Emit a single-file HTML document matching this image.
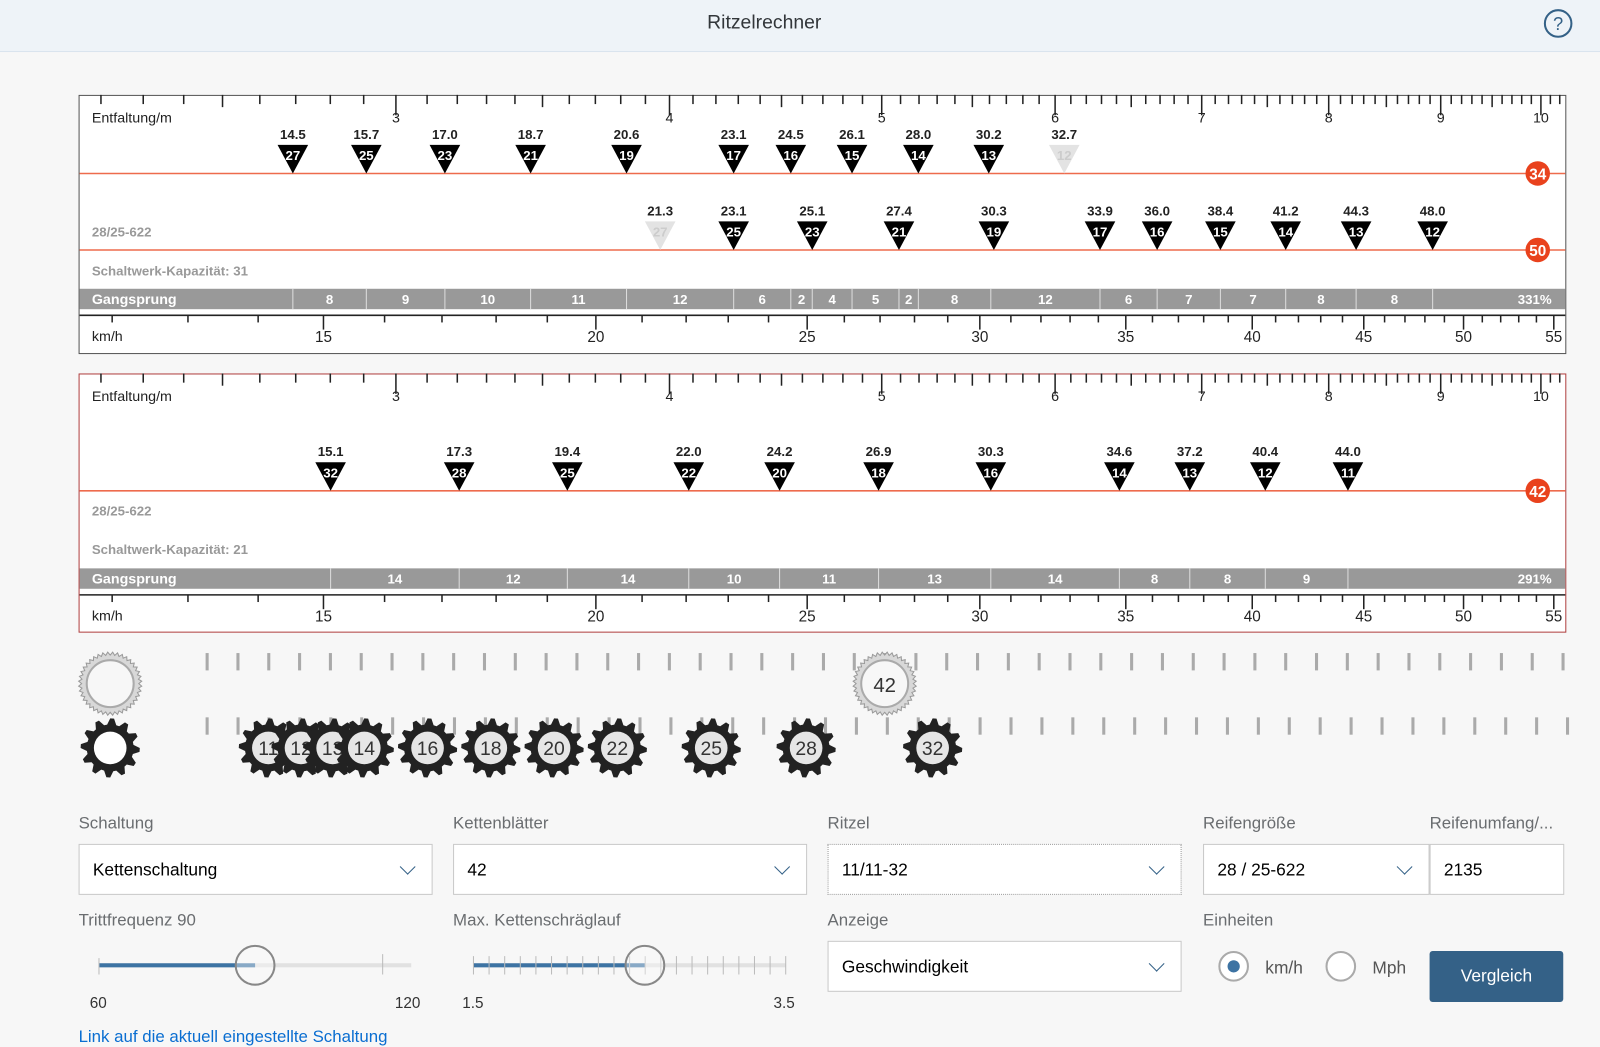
<!DOCTYPE html>
<html><head><meta charset="utf-8"><style>
*{box-sizing:border-box;margin:0;padding:0}
html,body{width:1600px;height:1046px;overflow:hidden}
body{background:#f7f7f7;font-family:"Liberation Sans",sans-serif}
#w{position:absolute;left:0;top:0;width:1568px;height:1025px;transform:scale(1.0204);transform-origin:0 0}
.hdr{position:absolute;left:0;top:0;width:1568px;height:51px;background:#eef3f8;border-bottom:1px solid #d9e3ee}
.hdr .t{position:absolute;left:0;width:1498px;top:12px;text-align:center;font-size:19px;color:#32363a}
.lab{position:absolute;font-size:16.5px;color:#6a6d70}
.inp{position:absolute;height:50px;background:#fff;border:1px solid #c8c8c8;font-size:17px;color:#000;padding:15px 13px}
.chev{position:absolute;right:18px;top:16px;width:11px;height:11px;border-right:1.5px solid #346187;border-bottom:1.5px solid #346187;transform:rotate(45deg);}
svg text{font-family:"Liberation Sans",sans-serif}
</style></head><body><div id="w">
<div class="hdr"><div class="t">Ritzelrechner</div>
<svg style="position:absolute;left:1511px;top:7px" width="32" height="32"><circle cx="16" cy="16" r="13" fill="none" stroke="#346187" stroke-width="2"/><text x="16" y="22.5" text-anchor="middle" font-size="18" fill="#346187">?</text></svg></div>

<svg id="c" style="position:absolute;left:0;top:0" width="1568" height="800"></svg>

<div class="lab" style="left:77px;top:798px">Schaltung</div>
<div class="lab" style="left:444px;top:798px">Kettenblätter</div>
<div class="lab" style="left:811px;top:798px">Ritzel</div>
<div class="lab" style="left:1179px;top:798px">Reifengröße</div>
<div class="lab" style="left:1401px;top:798px">Reifenumfang/...</div>
<div class="inp" style="left:77px;top:827px;width:347px">Kettenschaltung<div class="chev"></div></div>
<div class="inp" style="left:444px;top:827px;width:347px">42<div class="chev"></div></div>
<div class="inp" style="left:811px;top:827px;width:347px;border:1px dotted #999">11/11-32<div class="chev"></div></div>
<div class="inp" style="left:1179px;top:827px;width:222px">28 / 25-622<div class="chev"></div></div>
<div class="inp" style="left:1401px;top:827px;width:132px">2135</div>
<div class="lab" style="left:77px;top:893px">Trittfrequenz 90</div>
<div class="lab" style="left:444px;top:893px">Max. Kettenschräglauf</div>
<div class="lab" style="left:811px;top:893px">Anzeige</div>
<div class="lab" style="left:1179px;top:893px">Einheiten</div>
<div class="inp" style="left:811px;top:922px;width:347px">Geschwindigkeit<div class="chev"></div></div>
<svg style="position:absolute;left:80px;top:920px" width="720" height="80">
<rect x="17" y="24" width="306" height="4" fill="#e1e1e1"/><rect x="17" y="24" width="153" height="4" fill="#3d73a3"/>
<line x1="17" y1="19" x2="17" y2="35" stroke="#bbb"/><line x1="295" y1="15" x2="295" y2="35" stroke="#bbb"/>
<circle cx="170" cy="26" r="19" fill="#fafafa" fill-opacity=".4" stroke="#888" stroke-width="2"/>
<text x="8" y="68" font-size="15" fill="#333">60</text><text x="307" y="68" font-size="15" fill="#333">120</text>
<rect x="384" y="24" width="306" height="4" fill="#e1e1e1"/><rect x="384" y="24" width="168" height="4" fill="#3d73a3"/>
<g stroke="#bbb" id="sl"></g>
<circle cx="552" cy="26" r="19" fill="#fafafa" fill-opacity=".4" stroke="#888" stroke-width="2"/>
<text x="373" y="68" font-size="15" fill="#333">1.5</text><text x="678" y="68" font-size="15" fill="#333">3.5</text>
</svg>
<svg style="position:absolute;left:1190px;top:930px" width="200" height="36">
<circle cx="19" cy="17" r="14" fill="#fff" stroke="#aaa" stroke-width="2"/><circle cx="19" cy="17" r="6" fill="#3d73a3"/>
<text x="50" y="24" font-size="17" fill="#555">km/h</text>
<circle cx="124" cy="17" r="14" fill="#fff" stroke="#aaa" stroke-width="2"/>
<text x="155" y="24" font-size="17" fill="#555">Mph</text></svg>
<div style="position:absolute;left:1401px;top:932px;width:131px;height:50px;background:#346187;border-radius:3px;color:#fff;font-size:17px;text-align:center;line-height:50px">Vergleich</div>
<div style="position:absolute;left:77px;top:1007px;font-size:16.5px;color:#0a6ed1">Link auf die aktuell eingestellte Schaltung</div>
</div>
<script>
var s='';
var E=function(v){return 388+932*Math.log(v/3)}, K=function(v){return 317+928*Math.log(v/15)};
function chart(y0,red,rows,gs,gsy,kap,circ){
 s+='<rect x="77.5" y="'+(y0+0.5)+'" width="1457" height="253" fill="#fff" stroke="'+(red?'#b04040':'#555')+'"/>';
 for(var i=18;i<=103;i++){var v=i/10,x=E(v);if(x<80||x>1533)continue;var maj=i%10==0,hal=i%5==0;
  s+='<line x1="'+x+'" y1="'+y0+'" x2="'+x+'" y2="'+(y0+(maj?20:hal?12:9))+'" stroke="#222" stroke-width="1.5"/>';
  if(maj)s+='<text x="'+x+'" y="'+(y0+27)+'" text-anchor="middle" font-size="14" fill="#222">'+(i/10)+'</text>';}
 s+='<text x="90" y="'+(y0+27)+'" font-size="14" fill="#222">Entfaltung/m</text>';
 rows.forEach(function(r){s+='<line x1="78" y1="'+r.ly+'" x2="1534" y2="'+r.ly+'" stroke="#ee6b4d" stroke-width="1.5"/>';
  s+='<circle cx="1507" cy="'+r.ly+'" r="12" fill="#e9421d"/><text x="1507" y="'+(r.ly+6)+'" text-anchor="middle" font-size="15" font-weight="bold" fill="#fff">'+r.c+'</text>';
  r.m.forEach(function(m){var x=m[0],l=m[3];var f=l?'#e3e3e3':'#000',tc=l?'#ccc':'#fff';
   s+='<polygon points="'+(x-15)+','+(r.ly-28)+' '+(x+15)+','+(r.ly-28)+' '+x+','+r.ly+'" fill="'+f+'"/>';
   s+='<text x="'+x+'" y="'+(r.ly-13)+'" text-anchor="middle" font-size="13" font-weight="bold" fill="'+tc+'">'+m[2]+'</text>';
   s+='<text x="'+x+'" y="'+(r.ly-34)+'" text-anchor="middle" font-size="13" font-weight="bold" fill="#222">'+m[1]+'</text>';});});
 s+='<text x="90" y="'+kap[0]+'" font-size="13" font-weight="bold" fill="#999">28/25-622</text>';
 s+='<text x="90" y="'+kap[1]+'" font-size="13" font-weight="bold" fill="#999">Schaltwerk-Kapazität: '+kap[2]+'</text>';
 s+='<rect x="78" y="'+gsy+'" width="1456" height="20" fill="#999"/><text x="90" y="'+(gsy+15)+'" font-size="14" font-weight="bold" fill="#fff">Gangsprung</text>';
 for(var j=0;j<gs.length;j++){var a=gs[j][0],b=j+1<gs.length?gs[j+1][0]:1534;
  s+='<line x1="'+a+'" y1="'+gsy+'" x2="'+a+'" y2="'+(gsy+20)+'" stroke="#ddd"/>';
  s+='<text x="'+(j==gs.length-1?b-30:(a+b)/2)+'" y="'+(gsy+15)+'" text-anchor="middle" font-size="13" font-weight="bold" fill="#fff">'+gs[j][1]+'</text>';}
 var ky=gsy+26;s+='<line x1="78" y1="'+ky+'" x2="1534" y2="'+ky+'" stroke="#222" stroke-width="1.5"/>';
 for(var k=10;k<=56;k++){var x=K(k);if(x<82||x>1533)continue;var mj=k%5==0;
  s+='<line x1="'+x+'" y1="'+ky+'" x2="'+x+'" y2="'+(ky+(mj?14:7))+'" stroke="#222" stroke-width="1.5"/>';
  if(mj)s+='<text x="'+x+'" y="'+(ky+26)+'" text-anchor="middle" font-size="15" fill="#222">'+k+'</text>';}
 s+='<text x="90" y="'+(ky+25)+'" font-size="14" fill="#222">km/h</text>';
}
chart(93,false,[{ly:170,c:34,m:[[287,'14.5',27],[359,'15.7',25],[436,'17.0',23],[520,'18.7',21],[614,'20.6',19],[719,'23.1',17],[775,'24.5',16],[835,'26.1',15],[900,'28.0',14],[969,'30.2',13],[1043,'32.7',12,1]]},
{ly:245,c:50,m:[[647,'21.3',27,1],[719,'23.1',25],[796,'25.1',23],[881,'27.4',21],[974,'30.3',19],[1078,'33.9',17],[1134,'36.0',16],[1196,'38.4',15],[1260,'41.2',14],[1329,'44.3',13],[1404,'48.0',12]]}],
[[287,8],[359,9],[436,10],[520,11],[614,12],[719,6],[775,2],[796,4],[835,5],[881,2],[900,8],[971,12],[1078,6],[1134,7],[1196,7],[1260,8],[1329,8],[1404,'331%']],283,[232,270,31]);
chart(366,true,[{ly:481,c:42,m:[[324,'15.1',32],[450,'17.3',28],[556,'19.4',25],[675,'22.0',22],[764,'24.2',20],[861,'26.9',18],[971,'30.3',16],[1097,'34.6',14],[1166,'37.2',13],[1240,'40.4',12],[1321,'44.0',11]]}],
[[324,14],[450,12],[556,14],[675,10],[764,11],[861,13],[971,14],[1097,8],[1166,8],[1240,9],[1321,'291%']],557,[505,543,21]);
for(var x=203;x<1540;x+=30.2)s+='<rect x="'+(x-1.5)+'" y="640" width="3" height="17" fill="#aaa"/>';
for(var x=203;x<1540;x+=30.3)s+='<rect x="'+(x-1.5)+'" y="703" width="3" height="17" fill="#aaa"/>';
function ring(cx,cy,r,n){var p='';for(var i=0;i<n*2;i++){var a=i*Math.PI/n,rr=i%2?r:r-3;p+=(cx+rr*Math.cos(a))+','+(cy+rr*Math.sin(a))+' ';}
 s+='<polygon points="'+p+'" fill="#d8d8d8" stroke="#999"/><circle cx="'+cx+'" cy="'+cy+'" r="'+(r-8)+'" fill="#f7f7f7" stroke="#aaa" stroke-width="2"/>';}
function cog(cx,cy,t){var p='',n=12,r=29;for(var i=0;i<n*4;i++){var a=i*Math.PI/(n*2),rr=(i%4<2)?r:r-6;p+=(cx+rr*Math.cos(a))+','+(cy+rr*Math.sin(a))+' ';}
 s+='<polygon points="'+p+'" fill="#222"/><circle cx="'+cx+'" cy="'+cy+'" r="16" fill="'+(t?'#e6e6e6':'#fff')+'"/>';
 if(t)s+='<text x="'+cx+'" y="'+(cy+7)+'" text-anchor="middle" font-size="19" fill="#333">'+t+'</text>';}
ring(108,670,31,40);cog(108,733,'');
[[263,11],[295,12],[326,13],[357,14],[419,16],[481,18],[543,20],[605,22],[697,25],[790,28],[914,32]].forEach(function(g){cog(g[0],733,g[1]);});
ring(867,670,31,40);s+='<text x="867" y="678" text-anchor="middle" font-size="20" fill="#333">42</text>';
document.getElementById('c').innerHTML=s;
var t='';for(var i=0;i<=20;i++){var x=384+i*15.3;t+='<line x1="'+x+'" y1="17" x2="'+x+'" y2="35"/>';}
document.getElementById('sl').innerHTML=t;
</script>
</body></html>
